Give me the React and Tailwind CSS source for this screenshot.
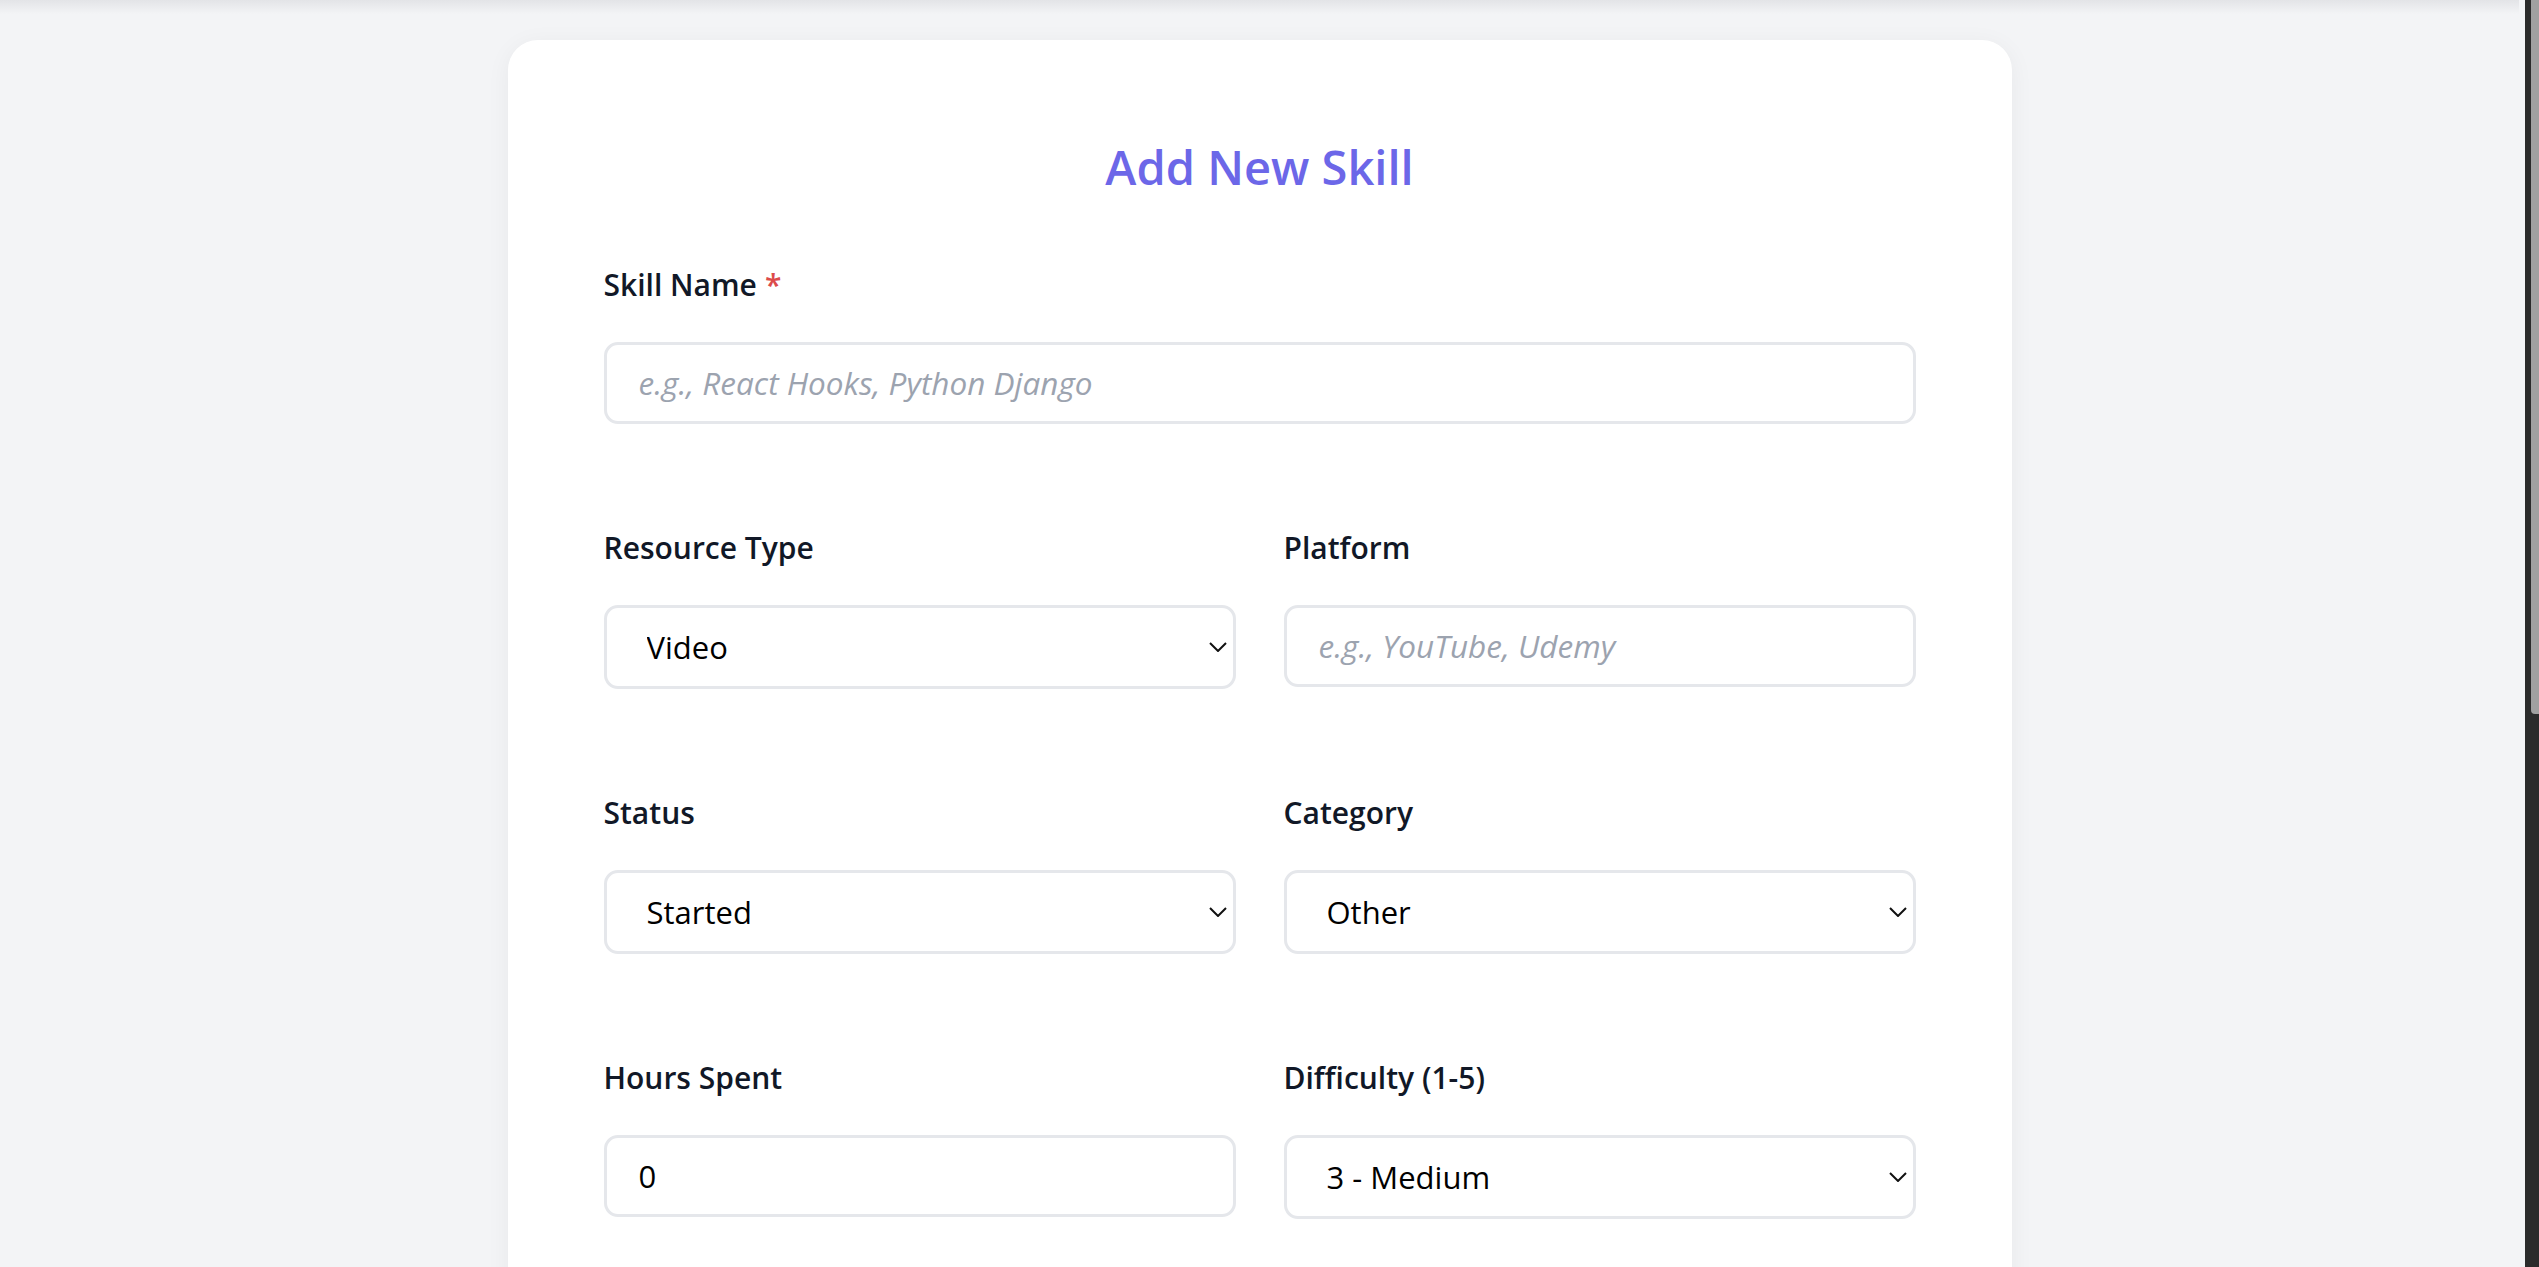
import React from 'react'

function Label({ children, required }) {
  return (
    <label className="mb-[37px] block h-[40px] text-[30px] leading-[40px] font-semibold text-[#111827]">
      {children}
      {required && <span className="ml-[8px] text-[#dc4b4b]">*</span>}
    </label>
  )
}

function TextInput({ placeholder, defaultValue, type = 'text' }) {
  return (
    <input
      type={type}
      placeholder={placeholder}
      defaultValue={defaultValue}
      className="block h-[82px] w-full rounded-[14px] border-[3px] border-[#e5e7eb] bg-white pl-[32px] pr-[24px] text-[31px] text-black outline-none placeholder:text-[31.5px] placeholder:italic placeholder:text-[#9ca3af]"
    />
  )
}

function Select({ value, options }) {
  return (
    <div className="relative">
      <select
        defaultValue={value}
        className="block h-[84px] w-full appearance-none rounded-[14px] border-[3px] border-[#e5e7eb] bg-white pl-[40px] pr-[48px] text-[31px] text-black outline-none"
      >
        {options.map((o) => (
          <option key={o} value={o}>
            {o}
          </option>
        ))}
      </select>
      <svg
        className="pointer-events-none absolute right-[9px] top-1/2 h-[10px] w-[18px] -translate-y-1/2"
        viewBox="0 0 18 10"
        fill="none"
        stroke="#111"
        strokeWidth={2}
      >
        <path d="M1 1l8 8 8-8" />
      </svg>
    </div>
  )
}

function Field({ label, required, children }) {
  return (
    <div className="mb-[104px]">
      <Label required={required}>{label}</Label>
      {children}
    </div>
  )
}

export default function App() {
  return (
    <div className="flex h-[1267px] w-full overflow-hidden bg-[#f3f4f6] font-['Open_Sans',sans-serif]">
      <main className="flex flex-1 flex-col items-center pr-[6px]">
        <div className="h-[14px] w-full shrink-0 bg-gradient-to-b from-[#e3e4e7] to-[#f3f4f6]" />
        <div className="mt-[26px] w-[1504px] shrink-0 rounded-[30px] bg-white px-[96px] pt-[96px] pb-[200px] shadow-[0_4px_24px_rgba(0,0,0,0.05)]">
          <h2 className="mb-[67px] h-[62px] text-center text-[47px] leading-[62px] font-semibold text-[#6c67e8]">
            Add New Skill
          </h2>

          <Field label="Skill Name" required>
            <TextInput placeholder="e.g., React Hooks, Python Django" />
          </Field>

          <div className="grid grid-cols-2 gap-x-[48px]">
            <Field label="Resource Type">
              <Select value="Video" options={['Video', 'Course', 'Article', 'Book', 'Documentation', 'Tutorial']} />
            </Field>
            <Field label="Platform">
              <TextInput placeholder="e.g., YouTube, Udemy" />
            </Field>

            <Field label="Status">
              <Select value="Started" options={['Started', 'In Progress', 'Completed']} />
            </Field>
            <Field label="Category">
              <Select value="Other" options={['Frontend', 'Backend', 'DevOps', 'Other']} />
            </Field>

            <Field label="Hours Spent">
              <TextInput type="number" defaultValue="0" />
            </Field>
            <Field label="Difficulty (1-5)">
              <Select
                value="3 - Medium"
                options={['1 - Very Easy', '2 - Easy', '3 - Medium', '4 - Hard', '5 - Very Hard']}
              />
            </Field>
          </div>
        </div>
      </main>
      <div className="flex w-[14px] shrink-0 justify-end bg-[#2b2b2b]">
        <div className="h-[714px] w-[8px] rounded-bl-[4px] bg-[#a0a0a0]" />
      </div>
    </div>
  )
}
